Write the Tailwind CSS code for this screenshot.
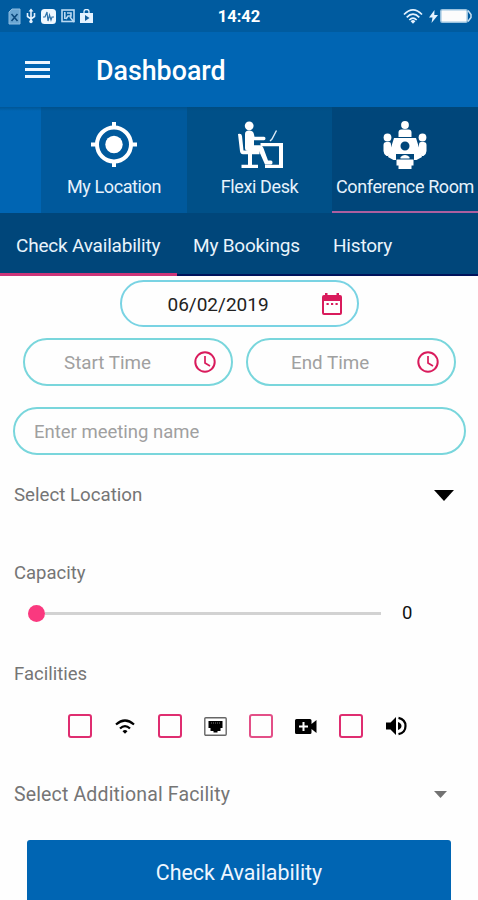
<!DOCTYPE html>
<html lang="en">
<head>
<meta charset="utf-8">
<title>Dashboard</title>
<script src="https://cdn.jsdelivr.net/npm/@tailwindcss/browser@4"></script>
</head>
<body class="w-[478px] h-[900px] overflow-hidden bg-[#fefefe] font-[Roboto,sans-serif] text-[18.5px] leading-6 whitespace-nowrap">
<div class="flex h-[900px] flex-col overflow-hidden">
  <!-- status bar -->
  <header class="relative flex h-8 shrink-0 items-center justify-between bg-[#005b9f] pl-2 pr-[6px] text-white">
    <div class="flex items-center gap-[5px]">
      <svg class="h-[17px] w-[13px]" viewBox="0 0 13 17"><path d="M4 1h8v15H1V4z" fill="#6ba7d3" stroke="#8dbce0"/><path d="M3.500 6l6 7M9.500 6l-6 7" stroke="#0d4a7d" stroke-width="1.600"/></svg>
      <svg class="h-4 w-[10px]" viewBox="0 0 10 16" fill="none" stroke="#e4f2ff" stroke-width="1.600"><path d="M5 2v11M1.500 5v3.500L5 11l3.500-2.500V5"/><path d="M2.500 3.500L5 .5l2.500 3z" fill="#e4f2ff" stroke="none"/><circle cx="5" cy="13.500" r="1.700" fill="#e4f2ff" stroke="none"/></svg>
      <svg class="h-[15px] w-[15px]" viewBox="0 0 15 15"><rect width="15" height="15" rx="3.500" fill="#eef7ff"/><path d="M2 8h2l2-5 1 9 1.500-6 1.500 5 1-3h2" fill="none" stroke="#2f73aa" stroke-width="1.200"/></svg>
      <svg class="h-[14px] w-[14px]" viewBox="0 0 14 14" fill="none" stroke="#b9d9f2" stroke-width="1.600"><rect x="1" y="1" width="12" height="11.500"/><path d="M3.800 3v7M6 4h4v3H7l-2 3M9 8l4 5"/></svg>
      <svg class="h-[14px] w-[13px]" viewBox="0 0 13 14"><path d="M4 4V2.500a2.500 2 0 0 1 5 0V4" fill="none" stroke="#e4f2ff" stroke-width="1.300"/><path d="M0 4h13v10H0z" fill="#e4f2ff"/><path d="M5 6l4.500 3L5 12z" fill="#155f9b"/></svg>
    </div>
    <div class="flex items-center gap-[6px]">
      <svg class="h-[15px] w-5" viewBox="0 0 20 15" fill="none" stroke="#e4f3ff" stroke-width="1.700"><path d="M1 5.500Q10-3.500 19 5.500M3.700 8.300Q10 2 16.300 8.300M6.300 11Q10 7.300 13.700 11"/><path d="M7.600 12.200Q10 10 12.400 12.200L10 14.800z" fill="#e4f3ff" stroke="none"/></svg>
      <div class="flex items-center gap-[2px]">
        <svg class="h-[13px] w-[9px]" viewBox="0 0 9 13"><path d="M5.500 0L0 7.500h3.500L2.500 13 9 5H5.300z" fill="#e4f3ff"/></svg>
        <svg class="h-[14px] w-8" viewBox="0 0 32 14"><rect x=".8" y=".8" width="26.400" height="12.400" rx="1.500" fill="#fcfcfc" stroke="#9bc3df" stroke-width="1.500"/><path d="M28 1.500l3 4v3l-3 4" fill="none" stroke="#c5dff2" stroke-width="1.500"/></svg>
      </div>
    </div>
    <div class="absolute inset-x-0 top-[5px] text-center text-[16.500px] font-bold">14:42</div>
  </header>
  <!-- app bar -->
  <div class="flex h-[75px] shrink-0 items-center bg-[#0065b3] pl-[25px] text-white">
    <div class="flex w-[25px] flex-col gap-1"><i class="h-[3px] bg-[#eef6ff]"></i><i class="h-[3px] bg-[#eef6ff]"></i><i class="h-[3px] bg-[#eef6ff]"></i></div>
    <h1 class="ml-[46px] pt-[2px] text-[26.800px] font-medium leading-8">Dashboard</h1>
  </div>
  <!-- main tabs -->
  <nav class="relative flex h-[106px] shrink-0 text-[18px] tracking-[-0.38px] text-[#e6f2fc]">
    <div class="w-[41px] bg-[#0065b3]"></div>
    <div class="flex w-[146px] flex-col items-center bg-[#00599c] pt-[14px]">
      <svg class="h-[48px] w-[46px]" viewBox="0 0 46 48" fill="none" stroke="#fff" stroke-width="4"><circle cx="23" cy="23.500" r="17"/><circle cx="23" cy="23.500" r="8.700" fill="#fff" stroke="none"/><path d="M23 1v6M23 40v6M0 23.500h6M40 23.500h6"/></svg>
      <span class="mt-[6px]">My Location</span>
    </div>
    <div class="flex w-[145px] flex-col items-center bg-[#005088] pt-[14px]">
      <svg class="h-[48px] w-[46px]" viewBox="0 0 46 48" fill="#fff"><circle cx="12.200" cy="4.800" r="4.400"/><path d="M8 13q0-3.500 4-3.500 4.500 0 5 4l.5 2.300H27q1.500 0 1.500 1.700T27 19.200H17v5h6q2.500 0 3.300 2.500L31 39.500h3q1.500 0 1.500 2t-1.500 2h-6L22 30H11q-3 0-3-3z"/><path d="M1 13q3.500-1 4 2l1.500 14.500h16v3.800H6q-2.500 0-3-3zM11 33h4v11h-4zM4.500 43.700H21V47H4.500zM23.500 22H46v25H28v-3.300h14V25.300H23.500z"/><path d="M33 20l2-2 4.500-8.500" fill="none" stroke="#dcebf7" stroke-width="1.400"/></svg>
      <span class="mt-[6px]">Flexi Desk</span>
    </div>
    <div class="flex w-[146px] flex-col items-center border-b-2 border-[#ad5f9f] bg-[#00467a] pt-[14px]">
      <svg class="h-[48px] w-[46px]" viewBox="0 0 46 48" fill="#fff"><circle cx="23" cy="4" r="3.900"/><path d="M16.500 16v-4.500q0-3 3-3h7q3 0 3 3V16z"/><circle cx="5.500" cy="16.500" r="3.900"/><circle cx="40.500" cy="16.500" r="3.900"/><path d="M1.500 24q0-3 3-3H7q2 0 2 3v5.500L6.500 35H4.500q-3-2-3-5zM44.500 24q0-3-3-3H39q-2 0-2 3v5.500l2.500 5.500h2q3-2 3-5z"/><path fill-rule="evenodd" d="M12 17h22l6 19-5.500 3H32v-6H14v6h-2.500L6 36zM23 20.500a4.500 4.500 0 1 0 0 9 4.500 4.500 0 0 0 0-9z"/><path d="M18.500 37.500v-1.500q4.500-4 9 0v1.500zM14.500 38.500h17v6h-2V48h-13v-3.500h-2z"/></svg>
      <span class="mt-[6px]">Conference Room</span>
    </div>
    <div class="absolute inset-x-0 top-0 h-[4px] bg-gradient-to-b from-[#004879]/50 to-transparent"></div>
  </nav>
  <!-- section tabs -->
  <nav class="flex h-[63px] shrink-0 bg-[#00467a] text-[19px] tracking-[-0.2px] text-[#e9f4fc]">
    <div class="w-[177px] border-b-[3px] border-[#cd3579] pl-4 pt-[21px]">Check Availability</div>
    <div class="w-[140px] border-b-2 border-[#00135b] pl-4 pt-[21px]">My Bookings</div>
    <div class="flex-1 border-b-2 border-[#00135b] pl-4 pt-[21px]">History</div>
  </nav>
  <main class="flex flex-1 flex-col text-[#757575]">
    <div class="mx-auto mt-[4px] flex h-[47px] w-[239px] items-center justify-between rounded-full border-2 border-[#79d3e3] pl-[46px] pr-[15px] text-[19px] text-[#222]">
      <span class="pt-[2px]">06/02/2019</span>
      <svg class="h-[22px] w-[20px]" viewBox="0 0 20 22"><path fill-rule="evenodd" fill="#d91b5c" d="M3 0h2.500v2h9V0H17v2h1q2 0 2 2v16q0 2-2 2H2q-2 0-2-2V4q0-2 2-2h1zM2 8v12h16V8z"/><path d="M4.500 11h2.200M9 11h2.200M13.500 11h2.200" stroke="#d91b5c" stroke-width="2"/></svg>
    </div>
    <div class="mt-[11px] flex gap-[13px] pl-[23px] text-[#a0a0a0]">
      <div class="flex h-[48px] w-[210px] items-center justify-between rounded-full border-2 border-[#79d6dc] pl-[39px] pr-[15px]"><span class="pt-[2px] text-[18.800px]">Start Time</span>
        <svg class="h-[22px] w-[22px]" viewBox="0 0 22 22" fill="none" stroke="#d91b5c" stroke-width="2"><circle cx="11" cy="11" r="9.700"/><path d="M11 5v7l5 3" stroke-width="1.700"/></svg></div>
      <div class="flex h-[48px] w-[210px] items-center justify-between rounded-full border-2 border-[#79d6dc] pl-[43px] pr-[15px]"><span class="pt-[2px] text-[18.800px]">End Time</span>
        <svg class="h-[22px] w-[22px]" viewBox="0 0 22 22" fill="none" stroke="#d91b5c" stroke-width="2"><circle cx="11" cy="11" r="9.700"/><path d="M11 5v7l5 3" stroke-width="1.700"/></svg></div>
    </div>
    <div class="ml-[13px] mt-[21px] flex h-[48px] w-[453px] items-center rounded-full border-2 border-[#79d6dc] pl-[19px] pt-[2px] text-[#a0a0a0]">Enter meeting name</div>
    <div class="mt-[28px] flex items-center justify-between pl-[14px] pr-[24px]"><span class="text-[18.700px]">Select Location</span><svg class="h-[11px] w-5" viewBox="0 0 20 11"><path d="M0 0h20L10 11z"/></svg></div>
    <div class="mt-[54px] pl-[14px]">Capacity</div>
    <div class="mt-[16px] flex items-center pl-[28px]"><i class="h-[17px] w-[17px] rounded-full bg-[#fa397f]"></i><i class="h-[3px] w-[336px] bg-[#d2d2d2]"></i><span class="ml-[21px] text-[#111]">0</span></div>
    <div class="mt-[37px] pl-[14px]">Facilities</div>
    <div class="mt-[28px] flex h-6 items-center pl-[68px]">
      <i class="h-6 w-6 rounded-[3px] border-2 border-[#df2d70]"></i>
      <svg class="ml-[23px] h-[15px] w-5" viewBox="0 0 20 15" fill="none" stroke="#000" stroke-width="2.200"><path d="M1 5.500Q10-2.500 19 5.500M5 9.500Q10 4.500 15 9.500"/><path d="M7.500 12.200Q10 10 12.500 12.200L10 14.800z" fill="#000" stroke="none"/></svg>
      <i class="ml-[23px] h-6 w-6 rounded-[3px] border-2 border-[#df2d70]"></i>
      <svg class="ml-[22px] h-[19px] w-[23px]" viewBox="0 0 23 19"><rect x=".8" y=".8" width="21.400" height="17.400" rx="1" fill="#fff" stroke="#666" stroke-width="1.400"/><path d="M4.500 4h14v7h-2v3h-3v1.500h-4V14h-3v-3h-2z"/><path d="M7 6h9" stroke="#777" stroke-dasharray="1 1"/></svg>
      <i class="ml-[22px] h-6 w-6 rounded-[3px] border-2 border-[#e34f87]"></i>
      <svg class="ml-[22px] h-[15px] w-[22px]" viewBox="0 0 22 15"><path d="M1.500 0H15q1.500 0 1.500 1.500V5L21.500 1v13l-5-4v3.500Q16.500 15 15 15H1.500Q0 15 0 13.500v-12Q0 0 1.500 0z"/><path d="M8.500 3v9M4 7.500h9" stroke="#fff" stroke-width="2"/></svg>
      <i class="ml-[22px] h-6 w-6 rounded-[3px] border-2 border-[#df2d70]"></i>
      <svg class="ml-[23px] h-5 w-[21px]" viewBox="0 0 21 20"><path d="M0 6.500h4.500L10 1v18l-5.500-5.500H0zM12 6q3.500 1.500 3.500 4T12 14z"/><path d="M12.500 1.800q7 1.500 7 8.200t-7 8.200" fill="none" stroke="#000" stroke-width="2.200"/></svg>
    </div>
    <div class="mt-[44px] flex items-center justify-between pl-[14px] pr-[31px] text-[19.500px] tracking-[0.15px]"><span class="pt-px">Select Additional Facility</span><svg class="h-[7px] w-[13px]" viewBox="0 0 13 7"><path d="M0 0h13L6.500 7z" fill="#727272"/></svg></div>
    <button class="mx-auto mt-[33px] h-[66px] w-[424px] shrink-0 rounded-[3px] bg-[#0065b3] text-[21.400px] text-[#eef6ff]">Check Availability</button>
  </main>
</div>
</body>
</html>
